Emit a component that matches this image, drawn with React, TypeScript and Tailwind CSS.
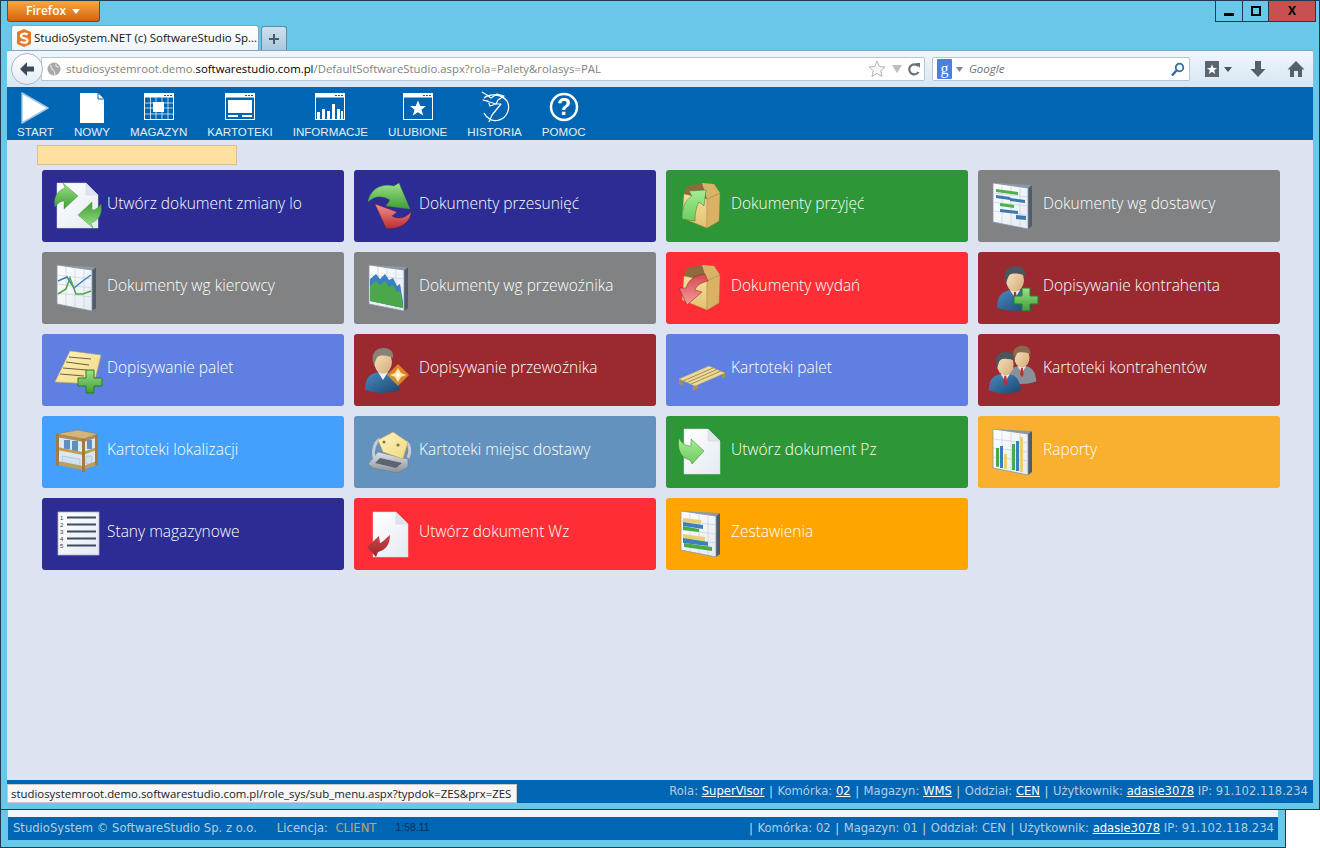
import React from "react";

const Page = ({ x = 3, r = 44, t = 1, b = 46 }: { x?: number; r?: number; t?: number; b?: number }) => (
  <>
    <path d={`M${x} ${t}H${r - 12}L${r} ${t + 12}V${b}H${x}Z`} fill="url(#gPage)" stroke="#d4dae4" strokeWidth=".5" />
    <path d={`M${r - 12} ${t}V${t + 12}H${r}Z`} fill="#dfe4ec" stroke="#c8d0dc" strokeWidth=".5" />
  </>
);

const Plus = () => (
  <path d="M33 26h8v8h8v8h-8v7h-8v-7h-8v-8h8z" transform="translate(-1 -2)" fill="url(#gGreen)" stroke="#2c7a2c" strokeWidth="1" />
);

const Chart = ({ children }: { children?: React.ReactNode }) => (
  <>
    <path d="M38 6L42 3V44L38 47Z" fill="#4e5c6c" />
    <path d="M3 1L38 6V47L3 40Z" fill="url(#gPage)" stroke="#8a96a4" strokeWidth=".8" />
    <path d="M3 1L42 3L38 6Z" fill="#8c98a6" />
    <path d="M12 2.500V41.500M21 3.800V43M30 5V45M3 11L38 15M3 20L38 24M3 29L38 33" stroke="#c0cad6" strokeWidth=".6" />
    {children}
  </>
);

const Box = () => (
  <>
    <path d="M9 4L24 1L36 2L42 11L29 17L6 12Z" fill="#8c6c3c" />
    <path d="M24 1L36 2L42 11L29 17Z" fill="#d8b468" />
    <path d="M6 12L29 17V46L4 36Z" fill="url(#gBox)" stroke="#a8803c" strokeWidth=".4" />
    <path d="M29 17L42 11L41 39L29 46Z" fill="#d9b266" stroke="#a8803c" strokeWidth=".4" />
  </>
);

const Person = ({ suit = "url(#gSuit)", hair = "#4a5560", tie = true }: { suit?: string; hair?: string; tie?: boolean }) => (
  <>
    <path d="M3 44C3 31 9 27 17 26H25C33 27 37 33 38 44Q20 50 3 44Z" fill={suit} />
    <path d="M16 26L21 34L26 26Z" fill="#f0f0f0" />
    {tie && <path d="M20 28H22L23 36L21 39L19 36Z" fill="#b83030" />}
    <ellipse cx="21" cy="16" rx="9" ry="11.500" fill="url(#gSkin)" />
    <path d="M11 16C9 6 15 2 22 2C28 2 32 6 31 12C28 10 22 9 17 10C14 11 14 15 12 19Z" fill={hair} />
  </>
);

const IconDocSwap = () => (
  <>
    <Page />
    <path d="M1 25C-1 15 4 8 11 6L9 1L24 14L10 27V19C7 19 4 21 1 25Z" fill="url(#gGreen)" stroke="#3c8c34" strokeWidth=".4" />
    <path d="M1 25C-1 15 4 8 11 6L9 1L24 14L10 27V19C7 19 4 21 1 25Z" transform="rotate(180 24 23.500)" fill="url(#gGreen)" stroke="#3c8c34" strokeWidth=".4" />
  </>
);
const IconTransfer = () => (
  <>
    <path d="M45 30C44 42 32 48 20 46L21 48L9 22L31 30L26 34C32 38 40 36 45 30Z" fill="url(#gRed)" stroke="#8c2020" strokeWidth=".4" />
    <path d="M2 20C4 8 14 1 28 4L33 1L44 27L20 24L24 18C16 13 8 14 2 20Z" fill="url(#gGreen)" stroke="#3c8c34" strokeWidth=".4" />
  </>
);
const IconBoxIn = () => (
  <>
    <Box />
    <path d="M4 37C4 26 7 18 14 14L11 9L28 8L26 24L21 20C18 25 17 32 17 39Z" fill="url(#gGreenLight)" stroke="#2f7f2c" strokeWidth=".5" />
  </>
);
const IconBoxOut = () => (
  <>
    <Box />
    <path d="M27 10C17 11 10 16 8 24L1 24L9 41L24 28L17 26C18 22 22 19 30 17Z" fill="url(#gRedLight)" stroke="#8c2020" strokeWidth=".5" />
  </>
);
const IconGantt = () => (
  <Chart>
    <path d="M6 7L28 10V13L6 10Z" fill="#4fae4f" />
    <path d="M6 13L20 15V18L6 16Z" fill="#3c78b0" />
    <path d="M20 16L35 18V21L20 19Z" fill="#3c78b0" />
    <path d="M10 21L24 23V26L10 24Z" fill="#4fae4f" />
    <path d="M10 27L28 29V32L10 30Z" fill="#3c78b0" />
    <path d="M26 33L36 34V38L26 37Z" fill="#3c78b0" />
  </Chart>
);
const IconLines = () => (
  <Chart>
    <path d="M4 17L13 13L20 24L30 16L37 11" fill="none" stroke="#3a7fc0" strokeWidth="1.500" />
    <path d="M4 30L12 25L16 14L22 30L29 30L37 27" fill="none" stroke="#4aa84a" strokeWidth="1.500" />
  </Chart>
);
const IconArea = () => (
  <Chart>
    <path d="M4 15L10 10L14 15L19 10L23 16L27 14L31 22L34 20L37 38V44L4 37Z" fill="#3a7fc0" />
    <path d="M4 22L10 17L14 21L19 17L23 23L27 21L31 28L34 27L37 41V44L4 37Z" fill="#4aa84a" />
  </Chart>
);
const IconBars = () => (
  <Chart>
    <path d="M6 20H9V39L6 38.500Z" fill="#4aa84a" />
    <path d="M10 18H13V40H10Z" fill="#3a7fc0" />
    <path d="M14 26H17V41H14Z" fill="#e8d070" />
    <path d="M22 16H25V42H22Z" fill="#4aa84a" />
    <path d="M26 13H29V43H26Z" fill="#3a7fc0" />
    <path d="M30 9H33V44H30Z" fill="#e8d070" />
  </Chart>
);
const IconHBars = () => (
  <Chart>
    <path d="M5 8L23 10V14L5 12Z" fill="#e8d070" />
    <path d="M5 12L25 15V19L5 16Z" fill="#3a7fc0" />
    <path d="M5 16L21 19V22L5 20Z" fill="#4aa84a" />
    <path d="M5 24L27 27V32L5 29Z" fill="#e8d070" />
    <path d="M5 28L30 32V36L5 33Z" fill="#3a7fc0" />
    <path d="M6 33L34 37V41L6 37Z" fill="#4aa84a" />
  </Chart>
);
const IconUserAdd = () => (
  <>
    <g transform="translate(4 0)">
      <Person />
    </g>
    <Plus />
  </>
);
const IconNotePlus = () => (
  <>
    <path d="M16 5L47 9L40 38L1 36Z" fill="url(#gNote)" stroke="#c0a860" strokeWidth=".6" />
    <path d="M15 11L37 13M12 16L35 19M9 22L33 24M6 28L30 30" stroke="#6a6040" strokeWidth="1" />
    <Plus />
  </>
);
const IconCarrier = () => (
  <>
    <g transform="translate(-4 0)">
      <Person suit="url(#gSuit)" hair="#8a8276" tie={false} />
    </g>
    <path d="M32 18L43 29L32 40L21 29Z" fill="#f09a20" opacity=".8" />
    <path d="M32 22L35 27L40 29L35 31L32 36L29 31L24 29L29 27Z" fill="#ffe8b0" />
    <circle cx="32" cy="29" r="1.800" fill="#fff" />
  </>
);
const IconPallet = () => (
  <>
    <path d="M1 33V38L5 40V36ZM15 39V45L20 43V38ZM44 27V32L47 31V26Z" fill="#a89050" />
    <path d="M1 33L31 20L47 27L17 40Z" fill="#ead99a" stroke="#b8a468" strokeWidth=".5" />
    <path d="M5 35L35 22M9 36.500L39 23.500M13 38L43 25" stroke="#a89050" strokeWidth="1" />
  </>
);
const IconContacts = () => (
  <>
    <g transform="translate(14 -2) scale(.85)">
      <Person suit="#8a9098" hair="#8a6a4a" />
    </g>
    <g transform="translate(-4 4) scale(.92)">
      <Person />
    </g>
  </>
);
const IconShelf = () => (
  <>
    <path d="M4 8L29 12L42 7V37L29 41L4 36Z" fill="#dfe8f0" />
    <path d="M10 12H16V21H10ZM18 13H24V23H18ZM33 12H38V21H33Z" fill="#5f8fc0" />
    <path d="M8 28L26 31V38L8 34ZM32 28H38V36H32Z" fill="#cfe0f0" stroke="#8cb0d0" strokeWidth=".5" />
    <path d="M2 6L24 2L44 6L30 11Z" fill="#d4b478" stroke="#8c6c3c" strokeWidth=".4" />
    <path d="M2 6L30 11V14L2 9ZM30 11L44 6V9L30 14Z" fill="#b08c50" />
    <path d="M3 19L29 24V27L3 22ZM29 24L43 19V22L29 27ZM3 33L29 38V42L3 37ZM29 38L43 33V37L29 42Z" fill="#c09c5c" />
    <path d="M2 6H5V38H2ZM28 11H31V44H28ZM41 7H44V37H41Z" fill="#a07c44" />
  </>
);
const IconRolodex = () => (
  <>
    <path d="M2 36L12 24L42 31V39L32 45L7 40Z" fill="url(#gMetal)" stroke="#707880" strokeWidth=".6" />
    <path d="M14 30L36 35L30 40L9 35Z" fill="#5c6470" />
    <path d="M8 30C6 22 9 14 14 11M42 30C45 24 44 17 40 14" fill="none" stroke="#c8ccd0" strokeWidth="3" />
    <path d="M12 12L27 4L42 14L37 31L17 24Z" fill="url(#gNote)" stroke="#b8a050" strokeWidth=".6" />
    <circle cx="18" cy="14" r="1.600" fill="#807850" />
    <circle cx="32" cy="17" r="1.600" fill="#807850" />
  </>
);
const IconDocIn = () => (
  <>
    <Page x={6} r={42} />
    <path d="M1 10C-1 20 2 30 12 32L14 36L26 23L13 11V18C8 18 4 16 1 10Z" fill="url(#gGreenLight)" stroke="#2f7f2c" strokeWidth=".5" />
  </>
);
const IconDocOut = () => (
  <>
    <Page x={7} r={42} t={2} b={47} />
    <path d="M24 25C24 34 20 40 12 42L10 47L1 37L13 26L14 33C17 32 19 29 24 25Z" fill="url(#gDarkRed)" />
  </>
);
const IconList = () => (
  <>
    <rect x="4" y="2" width="41" height="43" fill="url(#gPage)" stroke="#a8b4c4" strokeWidth=".8" />
    <path d="M13 7.500H42M13 14.500H42M13 21.500H42M13 28.500H42M13 35.500H42" stroke="#3c4c64" strokeWidth="2" />
    <text x="6" y="10" fontSize="6" fill="#333" fontFamily="Liberation Sans, sans-serif">1</text>
    <text x="6" y="17" fontSize="6" fill="#333" fontFamily="Liberation Sans, sans-serif">2</text>
    <text x="6" y="24" fontSize="6" fill="#333" fontFamily="Liberation Sans, sans-serif">3</text>
    <text x="6" y="31" fontSize="6" fill="#333" fontFamily="Liberation Sans, sans-serif">4</text>
    <text x="6" y="38" fontSize="6" fill="#333" fontFamily="Liberation Sans, sans-serif">5</text>
  </>
);

const TILES = [
  { label: "Utwórz dokument zmiany lo", bg: "bg-[#2c2c94]", icon: IconDocSwap },
  { label: "Dokumenty przesunięć", bg: "bg-[#2c2c94]", icon: IconTransfer },
  { label: "Dokumenty przyjęć", bg: "bg-[#2d9636]", icon: IconBoxIn },
  { label: "Dokumenty wg dostawcy", bg: "bg-[#808284]", icon: IconGantt },
  { label: "Dokumenty wg kierowcy", bg: "bg-[#808284]", icon: IconLines },
  { label: "Dokumenty wg przewoźnika", bg: "bg-[#808284]", icon: IconArea },
  { label: "Dokumenty wydań", bg: "bg-[#ff2e36]", icon: IconBoxOut },
  { label: "Dopisywanie kontrahenta", bg: "bg-[#9a2a30]", icon: IconUserAdd },
  { label: "Dopisywanie palet", bg: "bg-[#5f7fe2]", icon: IconNotePlus },
  { label: "Dopisywanie przewoźnika", bg: "bg-[#9a2a30]", icon: IconCarrier },
  { label: "Kartoteki palet", bg: "bg-[#5f7fe2]", icon: IconPallet },
  { label: "Kartoteki kontrahentów", bg: "bg-[#9a2a30]", icon: IconContacts },
  { label: "Kartoteki lokalizacji", bg: "bg-[#44a0fc]", icon: IconShelf },
  { label: "Kartoteki miejsc dostawy", bg: "bg-[#6492bf]", icon: IconRolodex },
  { label: "Utwórz dokument Pz", bg: "bg-[#2d9636]", icon: IconDocIn },
  { label: "Raporty", bg: "bg-[#f8b02e]", icon: IconBars },
  { label: "Stany magazynowe", bg: "bg-[#2c2c94]", icon: IconList },
  { label: "Utwórz dokument Wz", bg: "bg-[#ff2e36]", icon: IconDocOut },
  { label: "Zestawienia", bg: "bg-[#ffa500]", icon: IconHBars },
];

const WinFrame = ({ children }: { children?: React.ReactNode }) => (
  <>
    <rect x="1.500" y="2.500" width="29" height="26" fill="none" stroke="#fff" strokeWidth="1" />
    <rect x="1.500" y="2.500" width="29" height="4" fill="#fff" />
    <path d="M21 4.500h2M24 4.500h2M27 4.500h2" stroke="#0066b3" strokeWidth="1" />
    {children}
  </>
);

const NAV = [
  {
    label: "START",
    icon: <path d="M3 2L29 17L3 32Z" fill="#fff" stroke="#9fc6e6" strokeWidth="1.500" strokeLinejoin="round" />,
  },
  {
    label: "NOWY",
    icon: (
      <>
        <path d="M4 2H22L28 8V32H4Z" fill="#fff" />
        <path d="M22 2V8H28" fill="none" stroke="#0066b3" strokeWidth="1" />
      </>
    ),
  },
  {
    label: "MAGAZYN",
    icon: (
      <WinFrame>
        <path d="M1.500 12H30M1.500 17H30M1.500 23H30M7.500 6V28M13 6V28M19 6V28M25 6V28" stroke="#fff" strokeWidth=".7" />
        <rect x="10" y="11" width="11" height="10" fill="#fff" />
      </WinFrame>
    ),
  },
  {
    label: "KARTOTEKI",
    icon: (
      <WinFrame>
        <rect x="4" y="9" width="24" height="13" fill="#fff" />
        <rect x="4" y="24" width="10" height="2" fill="#fff" />
        <rect x="18" y="24" width="10" height="2" fill="#fff" />
      </WinFrame>
    ),
  },
  {
    label: "INFORMACJE",
    icon: (
      <WinFrame>
        <path d="M3 21h3v7H3zM8 18h3v10H8zM13 20h3v8h-3zM18 13h3v15h-3zM23 18h3v10h-3zM27 20h2v8h-2z" fill="#fff" />
      </WinFrame>
    ),
  },
  {
    label: "ULUBIONE",
    icon: (
      <WinFrame>
        <path d="M16 9.500L18.300 15H24L19.500 18.700L21.200 24.500L16 21.200L10.800 24.500L12.500 18.700L8 15H13.700Z" fill="#fff" />
      </WinFrame>
    ),
  },
  {
    label: "HISTORIA",
    icon: (
      <>
        <path d="M5 7C10 3 22 2 28 10C32 17 28 27 20 29C14 31 8 28 5 22" fill="none" stroke="#fff" strokeWidth="1.300" />
        <path d="M3 1L8 4L12 7L18 3L25 5L19 9L17 13L22 13L13 24L10 31M17 13L11 15L9 10L4 9Z" fill="none" stroke="#fff" strokeWidth="1.200" strokeLinejoin="round" />
      </>
    ),
  },
  {
    label: "POMOC",
    icon: (
      <>
        <circle cx="16" cy="16" r="13" fill="none" stroke="#fff" strokeWidth="2.500" />
        <text x="16" y="24" textAnchor="middle" fontSize="23" fontWeight="700" fill="#fff" fontFamily="Liberation Sans, sans-serif">?</text>
      </>
    ),
  },
];

const Sep = () => <span className="mx-[4.500px] text-[#c8d8e8]">|</span>;
const Lnk = ({ children }: { children: React.ReactNode }) => <span className="text-white underline">{children}</span>;

export default function App() {
  return (
    <div className="relative flex h-[848px] w-[1320px] flex-col overflow-hidden bg-white font-['Open_Sans',sans-serif]">
      <svg className="absolute h-0 w-0">
        <defs>
          <linearGradient id="gPage" x1="0" y1="0" x2="1" y2="1">
            <stop offset="0" stopColor="#ffffff" />
            <stop offset="1" stopColor="#e4eaf2" />
          </linearGradient>
          <linearGradient id="gGreen" x1="0" y1="0" x2="0" y2="1">
            <stop offset="0" stopColor="#9be088" />
            <stop offset="1" stopColor="#3f9e35" />
          </linearGradient>
          <linearGradient id="gGreenLight" x1="0" y1="0" x2="0" y2="1">
            <stop offset="0" stopColor="#a8ec94" />
            <stop offset="1" stopColor="#6ccc60" />
          </linearGradient>
          <linearGradient id="gRed" x1="0" y1="0" x2="0" y2="1">
            <stop offset="0" stopColor="#f29090" />
            <stop offset="1" stopColor="#b8282c" />
          </linearGradient>
          <linearGradient id="gRedLight" x1="0" y1="0" x2="0" y2="1">
            <stop offset="0" stopColor="#d84850" />
            <stop offset="1" stopColor="#f49aa0" />
          </linearGradient>
          <linearGradient id="gDarkRed" x1="0" y1="0" x2="0" y2="1">
            <stop offset="0" stopColor="#c84848" />
            <stop offset="1" stopColor="#a02428" />
          </linearGradient>
          <linearGradient id="gBox" x1="0" y1="0" x2="0" y2="1">
            <stop offset="0" stopColor="#f6e09c" />
            <stop offset="1" stopColor="#e4c070" />
          </linearGradient>
          <linearGradient id="gSuit" x1="0" y1="0" x2="1" y2="1">
            <stop offset="0" stopColor="#4a8cc0" />
            <stop offset="1" stopColor="#1a4572" />
          </linearGradient>
          <linearGradient id="gSkin" x1="0" y1="0" x2="1" y2="1">
            <stop offset="0" stopColor="#fae6c0" />
            <stop offset="1" stopColor="#d4aa78" />
          </linearGradient>
          <linearGradient id="gNote" x1="0" y1="0" x2="1" y2="1">
            <stop offset="0" stopColor="#fff4c0" />
            <stop offset="1" stopColor="#f0d880" />
          </linearGradient>
          <linearGradient id="gMetal" x1="0" y1="0" x2="0" y2="1">
            <stop offset="0" stopColor="#e0e4e8" />
            <stop offset="1" stopColor="#8a9098" />
          </linearGradient>
        </defs>
      </svg>

      {/* main window */}
      <div className="flex h-[810px] shrink-0 flex-col border border-[#1d3a4e] bg-[#69c8ea] px-[6px]">
        <div className="flex h-[24px] shrink-0 items-start justify-between">
          <div className="flex h-[21px] w-[93px] items-center rounded-b-[3px] border border-t-0 border-[#7a4a1a] bg-gradient-to-b from-[#f9a83f] to-[#d2620c] pl-[18px] text-[12px] font-semibold text-white">
            Firefox
            <svg className="ml-[6px]" width="8" height="5" viewBox="0 0 8 5">
              <path d="M0 0H8L4 5Z" fill="#fff" />
            </svg>
          </div>
          <div className="mr-[-3px] flex h-[21px] border border-t-0 border-[#1d3a4e]">
            <div className="flex w-[27px] items-end justify-center border-r border-[#1d3a4e] pb-[5px]">
              <div className="h-[3px] w-[10px] bg-black" />
            </div>
            <div className="flex w-[26px] items-center justify-center border-r border-[#1d3a4e]">
              <div className="h-[10px] w-[10px] border-[2.500px] border-black" />
            </div>
            <div className="flex w-[46px] items-center justify-center bg-[#c75050] text-[12px] font-bold text-black">X</div>
          </div>
        </div>

        <div className="flex h-[25px] shrink-0 items-end pl-[4px]">
          <div className="flex h-[25px] w-[248px] items-center gap-[3px] rounded-t-[3px] border border-b-0 border-[#7fa6bf] bg-gradient-to-b from-white to-[#eef4fa] pl-[5px] text-[11.500px] whitespace-nowrap text-[#111]">
            <svg className="shrink-0" width="14" height="18" viewBox="0 0 14 18">
              <path d="M7 0L14 3V15L7 18L0 15V3Z" fill="#e8792a" />
              <path d="M10.500 5.500C8 4 4 4.500 4 7C4 10 10.500 8.500 10.500 11.500C10.500 14 6 14.500 3.500 12.500" fill="none" stroke="#fff" strokeWidth="2.200" />
            </svg>
            StudioSystem.NET (c) SoftwareStudio Sp...
          </div>
          <div className="ml-[2px] flex h-[24px] w-[26px] items-center justify-center rounded-t-[3px] border border-b-0 border-[#5c8aa8] bg-gradient-to-b from-[#cfe0ec] to-[#a9c8dc]">
            <svg width="12" height="12" viewBox="0 0 12 12">
              <path d="M6 1V11M1 6H11" stroke="#475a6a" strokeWidth="2" />
            </svg>
          </div>
        </div>

        <div className="flex h-[37px] shrink-0 items-center rounded-t-[2px] border-t border-[#7fa6bf] bg-gradient-to-b from-[#f0f6fc] to-[#d7e6f3]">
          <div className="z-10 ml-[4px] flex h-[32px] w-[32px] shrink-0 items-center justify-center rounded-full border border-[#a8b8c8] bg-gradient-to-b from-white to-[#e4ecf4]">
            <svg width="18" height="18" viewBox="0 0 18 18">
              <path d="M9 2L2 9L9 16V11.500H16V6.500H9Z" fill="#3c4a58" />
            </svg>
          </div>
          <div className="ml-[-2px] flex h-[24px] w-[884px] shrink-0 items-center rounded-r-[2px] border border-[#b8c4d0] bg-white pl-[5px] text-[11.370px] whitespace-nowrap text-[#7f7f7f]">
            <svg className="mr-[5px] shrink-0" width="14" height="14" viewBox="0 0 14 14">
              <circle cx="7" cy="7" r="6.500" fill="#a8a8a8" />
              <path d="M3 3C5 5 4 7 6 8C8 9 7 11 8 13M9 2C8 4 10 5 12 5" fill="none" stroke="#e0e0e0" strokeWidth="1.200" />
            </svg>
            <span>
              studiosystemroot.demo.<span className="text-black">softwarestudio.com.pl</span>/DefaultSoftwareStudio.aspx?rola=Palety&amp;rolasys=PAL
            </span>
            <div className="ml-auto flex items-center gap-[6px] pr-[4px]">
              <svg width="18" height="18" viewBox="0 0 18 18">
                <path d="M9 1L11.300 6.500L17 7L12.700 10.800L14 16.500L9 13.500L4 16.500L5.300 10.800L1 7L6.700 6.500Z" fill="#f8f8f8" stroke="#b4b4b4" />
              </svg>
              <svg width="10" height="8" viewBox="0 0 10 8">
                <path d="M0 0H10L5 8Z" fill="#b8bec4" />
              </svg>
              <svg width="12" height="14" viewBox="0 0 12 14">
                <path d="M10 4A5 5 0 1 0 10.500 10" fill="none" stroke="#6a7076" strokeWidth="2.200" />
                <path d="M7.500 1H12V6Z" fill="#6a7076" />
              </svg>
            </div>
          </div>
          <div className="ml-[7px] flex h-[24px] w-[258px] shrink-0 items-center rounded-[2px] border border-[#b8c4d0] bg-white pl-[4px] pr-[4px]">
            <div className="flex h-[20px] w-[15px] items-center justify-center rounded-[1px] bg-[#4a80e0] font-['Liberation_Serif',serif] text-[16px] text-white">g</div>
            <svg className="ml-[4px]" width="7" height="5" viewBox="0 0 7 5">
              <path d="M0 0H7L3.500 5Z" fill="#808890" />
            </svg>
            <span className="ml-[6px] text-[11.500px] italic text-[#707070]">Google</span>
            <svg className="ml-auto" width="15" height="15" viewBox="0 0 15 15">
              <circle cx="9.500" cy="5.500" r="3.800" fill="none" stroke="#2c6ca8" strokeWidth="1.800" />
              <path d="M6.500 8.500L2 13.500" stroke="#2c6ca8" strokeWidth="2.400" />
            </svg>
          </div>
          <div className="ml-[14px] flex items-center">
            <svg width="16" height="18" viewBox="0 0 16 18">
              <path d="M1 1H15V17H1Z" fill="#5c6670" />
              <path d="M8 4.500L9.500 8H13L10.200 10.300L11.200 14L8 11.800L4.800 14L5.800 10.300L3 8H6.500Z" fill="#fff" />
            </svg>
            <svg className="ml-[4px]" width="8" height="5" viewBox="0 0 8 5">
              <path d="M0 0H8L4 5Z" fill="#4a5460" />
            </svg>
            <svg className="ml-[18px]" width="16" height="18" viewBox="0 0 16 18">
              <path d="M5 1H11V9H15.500L8 17L.5 9H5Z" fill="#56606a" />
            </svg>
            <svg className="ml-[21px]" width="18" height="18" viewBox="0 0 18 18">
              <path d="M9 1L17.500 9.500H15V17H11V11H7V17H3V9.500H.5Z" fill="#56606a" />
            </svg>
          </div>
        </div>

        <div className="flex h-[53px] shrink-0 items-start gap-[20px] bg-[#0066b3] pl-[10px] pt-[4px] font-['Liberation_Sans',sans-serif] text-[11.600px] text-[#e6eef6]">
          {NAV.map((n) => (
            <div key={n.label} className="flex flex-col items-center">
              <svg width="32" height="33" viewBox="0 0 32 33">
                {n.icon}
              </svg>
              <span className="mt-[1px] leading-[13px]">{n.label}</span>
            </div>
          ))}
        </div>

        <div className="flex-1 bg-[#dde3f0]">
          <div className="ml-[30px] mt-[5px] h-[20px] w-[200px] border border-[#d8c088] bg-[#ffe0a0]" />
          <div className="ml-[35px] mt-[5px] grid w-[1238px] grid-cols-4 gap-[10px]">
            {TILES.map((t) => {
              const Icon = t.icon;
              return (
                <div key={t.label} className={`flex h-[72px] items-center rounded-[3px] pl-[12px] ${t.bg}`}>
                  <svg className="shrink-0 overflow-visible" width="48" height="48" viewBox="0 0 48 48">
                    <Icon />
                  </svg>
                  <span className="mb-[5px] ml-[5px] text-[15.500px] font-light whitespace-nowrap text-white">{t.label}</span>
                </div>
              );
            })}
          </div>
        </div>

        <div className="mb-[6px] flex h-[23px] shrink-0 items-center justify-end bg-[#0066b3] pr-[5px] font-['DejaVu_Sans',sans-serif] text-[11.600px] whitespace-nowrap text-[#b4cde4]">
          Rola:&nbsp;<Lnk>SuperVisor</Lnk>
          <Sep />
          Komórka:&nbsp;<Lnk>02</Lnk>
          <Sep />
          Magazyn:&nbsp;<Lnk>WMS</Lnk>
          <Sep />
          Oddział:&nbsp;<Lnk>CEN</Lnk>
          <Sep />
          Użytkownik:&nbsp;<Lnk>adasie3078</Lnk>&nbsp;IP: 91.102.118.234
        </div>
      </div>

      {/* link hover tooltip */}
      <div className="absolute left-[7px] top-[784px] flex h-[19px] w-[510px] items-center border border-[#c8c8c8] bg-[#f6f6f6] pl-[3px] text-[11.400px] whitespace-nowrap text-[#222]">
        studiosystemroot.demo.softwarestudio.com.pl/role_sys/sub_menu.aspx?typdok=ZES&amp;prx=ZES
      </div>

      {/* window behind */}
      <div className="flex h-[38px] w-[1286px] flex-col border-x border-b border-[#1d3a4e] bg-[#69c8ea] px-[7px] pb-[7px]">
        <div className="h-[7px] shrink-0 bg-[#eef6fb]" />
        <div className="flex flex-1 items-center bg-[#0066b3] pl-[5px] pr-[4px] font-['DejaVu_Sans',sans-serif] text-[11.600px] whitespace-nowrap text-[#b4cde4]">
          <span>StudioSystem © SoftwareStudio Sp. z o.o.</span>
          <span className="ml-[20px]">Licencja:&nbsp;&nbsp;</span>
          <span className="text-[#c8a078]">CLIENT</span>
          <span className="ml-[19px] mb-[2px] font-['Liberation_Sans',sans-serif] text-[10.500px] text-[#12305c]">1:58.11</span>
          <div className="ml-auto flex items-center">
            <Sep />
            Komórka: 02
            <Sep />
            Magazyn: 01
            <Sep />
            Oddział: CEN
            <Sep />
            Użytkownik:&nbsp;<Lnk>adasie3078</Lnk>&nbsp;IP: 91.102.118.234
          </div>
        </div>
      </div>
    </div>
  );
}
